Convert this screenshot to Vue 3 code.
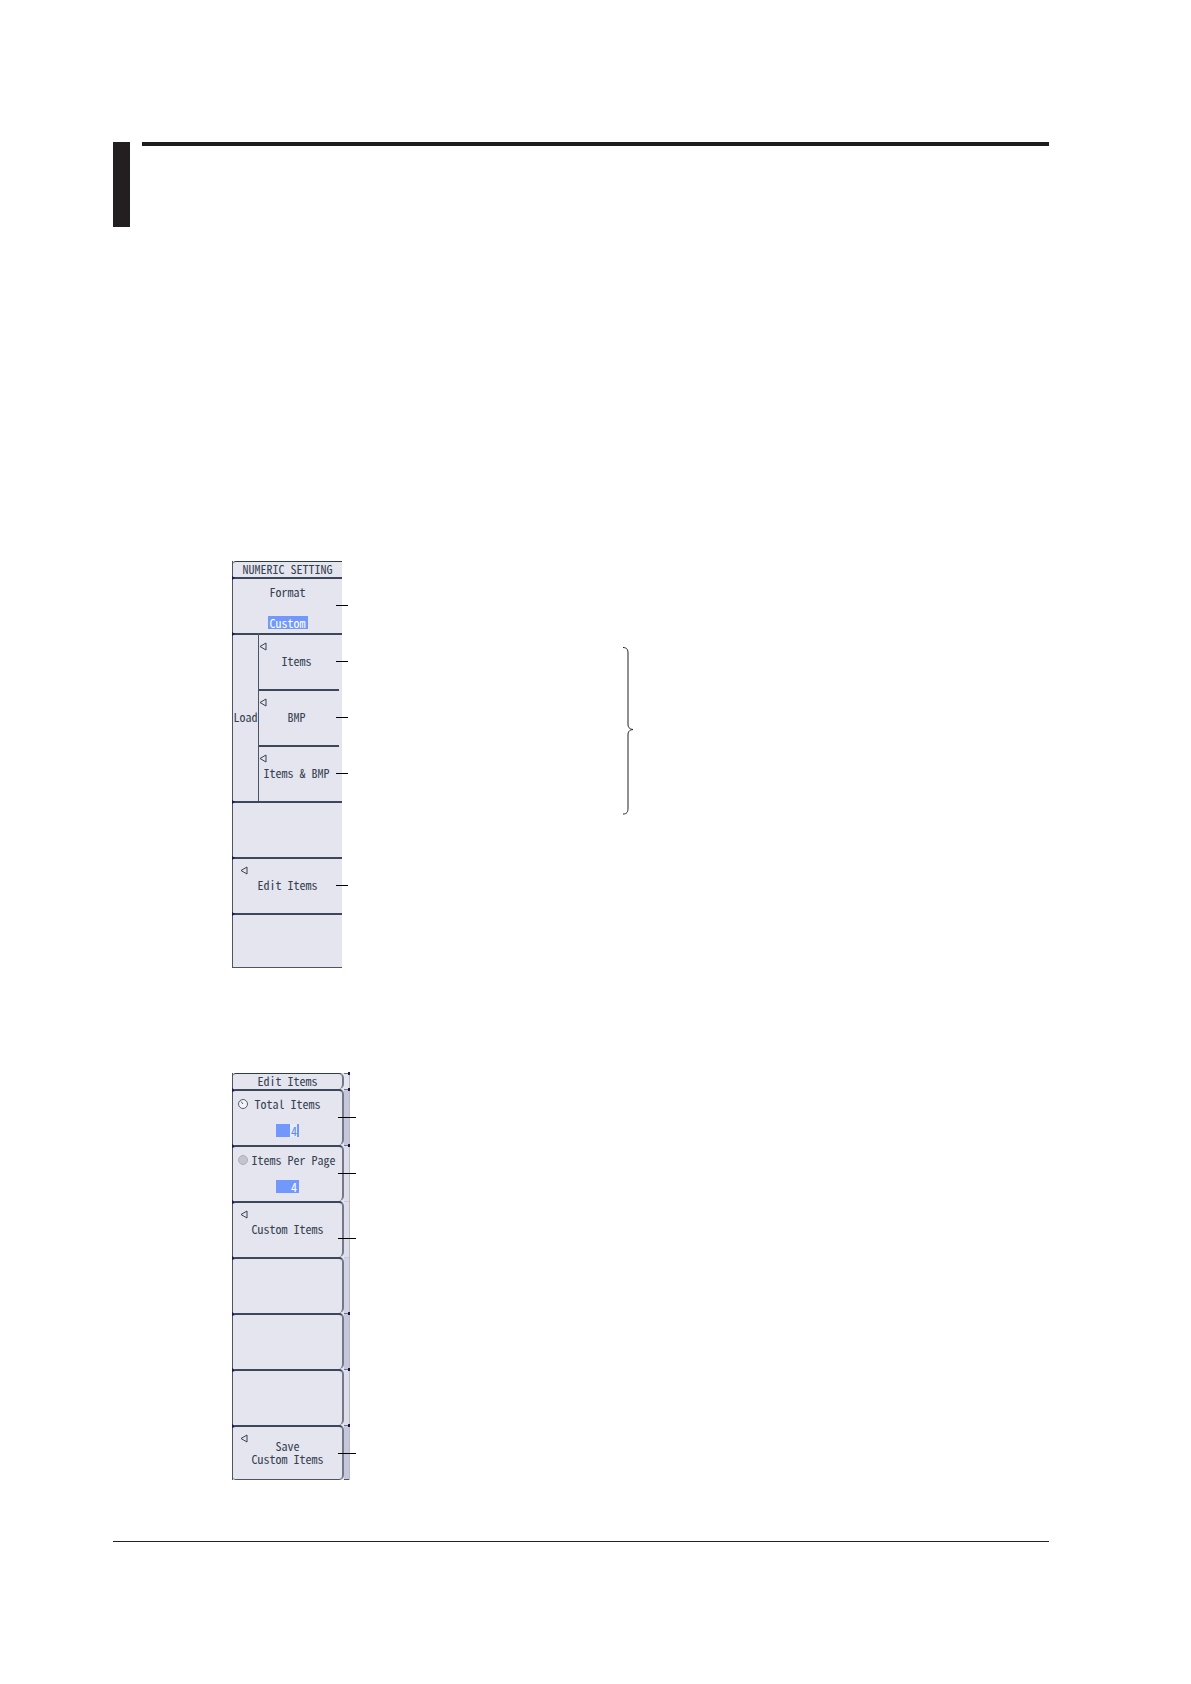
<script setup>
import { ref } from 'vue'

const format = ref('Custom')
const totalItems = ref('4')
const itemsPerPage = ref('4')

const loadItems = ['Items', 'BMP', 'Items & BMP']

// the strip on the right shows the edge of the parent menu
const strip = ['head', 'dark', 'light', 'light joined', 'mid joined', 'dark', 'light', 'dark']
</script>

<template>
  <main class="page">
    <header class="heading">
      <div class="tab"></div>
      <div class="rule"></div>
    </header>

    <section class="figure first">
      <div class="menu">
        <div class="title">NUMERIC SETTING</div>
        <div class="cell stacked spread">
          <label for="format">Format</label>
          <select id="format" v-model="format" class="value wide">
            <option>Custom</option>
          </select>
          <span class="leader"></span>
        </div>
        <div class="group">
          <div class="group-name">Load</div>
          <div class="group-cells">
            <button v-for="item in loadItems" :key="item" type="button" class="cell sub">
              <svg class="arrow" viewBox="0 0 8 9"><path d="M7 1v7L1 4.5z" /></svg>
              <span>{{ item }}</span>
              <span class="leader"></span>
            </button>
          </div>
        </div>
        <button type="button" class="cell" aria-label="Empty"></button>
        <button type="button" class="cell">
          <svg class="arrow" viewBox="0 0 8 9"><path d="M7 1v7L1 4.5z" /></svg>
          <span>Edit Items</span>
          <span class="leader"></span>
        </button>
        <button type="button" class="cell last" aria-label="Empty"></button>
      </div>

      <svg class="brace" viewBox="0 0 10 168">
        <path d="M0 .5C4 .5 5 3 5 6V77C5 80 6 82 10 82.500C6 83 5 85 5 88V161C5 165 4 167 0 167" />
      </svg>
    </section>

    <section class="figure second">
      <div class="menu rounded">
        <div class="title">Edit Items</div>
        <div class="cell stacked">
          <svg class="knob" viewBox="0 0 12 12">
            <circle cx="6" cy="6" r="4.500" />
            <path d="M4 3.500l2 2.500" />
          </svg>
          <label for="total">Total Items</label>
          <input id="total" v-model="totalItems" class="value active" type="text" />
          <span class="leader"></span>
        </div>
        <div class="cell stacked">
          <svg class="knob off" viewBox="0 0 12 12"><circle cx="6" cy="6" r="4.500" /></svg>
          <label for="per-page" class="shifted">Items Per Page</label>
          <input id="per-page" v-model="itemsPerPage" class="value" type="text" />
          <span class="leader"></span>
        </div>
        <button type="button" class="cell">
          <svg class="arrow" viewBox="0 0 8 9"><path d="M7 1v7L1 4.5z" /></svg>
          <span>Custom Items</span>
          <span class="leader low"></span>
        </button>
        <button v-for="n in 3" :key="n" type="button" class="cell" aria-label="Empty"></button>
        <button type="button" class="cell last">
          <svg class="arrow" viewBox="0 0 8 9"><path d="M7 1v7L1 4.5z" /></svg>
          <span>Save<br />Custom Items</span>
          <span class="leader"></span>
        </button>
      </div>
      <div class="strip">
        <div v-for="(tone, i) in strip" :key="i" :class="tone"></div>
      </div>
    </section>

    <footer class="bottom-rule"></footer>
  </main>
</template>

<style>
body {
  margin: 0;
  background: #fff;
}
</style>

<style scoped>
.page {
  padding: 142px 142px 142px 113px;
  font-family: 'Noto Sans Mono CJK JP', 'Liberation Mono', monospace;
  font-size: 12px;
  line-height: 13px;
  color: #35414f;
}

.heading {
  display: flex;
  gap: 12px;
  height: 85px;
}

.tab {
  width: 17px;
  background: #231f20;
}

.rule {
  flex: 1;
  height: 4px;
  background: #1e1c1d;
}

.figure {
  display: flex;
  align-items: flex-start;
  padding-left: 119px;
}

.first {
  margin-top: 334px;
}

.second {
  margin-top: 105px;
}

.menu {
  width: 110px;
  box-sizing: border-box;
  border-left: 1px solid #4d5562;
  background: #e4e5ef;
}

.title {
  height: 16px;
  box-sizing: border-box;
  border-top: 1px solid #2c3f45;
  border-radius: 3px 0 0 0;
  line-height: 14px;
  text-align: center;
  white-space: nowrap;
}

.cell {
  position: relative;
  display: flex;
  align-items: center;
  justify-content: center;
  width: 100%;
  height: 56px;
  box-sizing: border-box;
  margin: 0;
  padding: 0 0 4px;
  border: 0;
  border-top: 2px solid #3c4759;
  background: transparent;
  font: inherit;
  color: inherit;
  text-align: center;
  white-space: nowrap;
}

.cell.last {
  height: 55px;
  padding-bottom: 2px;
  border-bottom: 1px solid #4d5562;
}

/* dark joints where the cells meet the frame */
.menu > .cell::before,
.group::before {
  content: '';
  position: absolute;
  left: -1px;
  top: -3px;
  border: 2px solid transparent;
  border-left: 3px solid #1b1650;
}

.group::before {
  top: -1px;
}

.stacked {
  flex-direction: column;
  justify-content: flex-start;
  gap: 14px;
  padding: 6px 0 0;
}

.spread {
  gap: 18px;
}

.value {
  display: block;
  width: 23px;
  height: 13px;
  box-sizing: border-box;
  margin: 0;
  padding: 0 2px;
  border: 0;
  border-radius: 0;
  outline: 0;
  appearance: none;
  background: #7298fb;
  font: inherit;
  color: #fff;
  text-align: right;
}

.value.wide {
  width: 40px;
  padding: 0;
  text-align: center;
}

.value.active {
  color: #5f86ee;
  background: linear-gradient(#e6ecff, #e6ecff) 14px 0 / 7px 13px no-repeat #7298fb;
}

.shifted {
  padding-left: 12px;
}

.group {
  position: relative;
  display: flex;
}

.group-name {
  display: flex;
  align-items: center;
  justify-content: center;
  width: 25px;
  box-sizing: border-box;
  padding-bottom: 4px;
  border-top: 2px solid #3c4759;
}

.group-cells {
  flex: 1;
  border-left: 1px solid #4d5562;
}

.cell.sub {
  padding-right: 8px;
}

.cell.sub + .sub {
  border-top-color: transparent;
  background: linear-gradient(#3c4759, #3c4759) 0 0 / calc(100% - 3px) 2px no-repeat border-box;
}

.arrow {
  position: absolute;
  left: 7px;
  top: 7px;
  width: 8px;
  height: 9px;
  fill: none;
  stroke: #35414f;
}

.sub .arrow {
  left: 0;
}

.knob {
  position: absolute;
  left: 4px;
  top: 7px;
  width: 12px;
  height: 12px;
  fill: #f3f4f9;
  stroke: #555d69;
}

.knob.off {
  fill: #c3c4cd;
  stroke: #adafb9;
}

.leader {
  position: absolute;
  right: -6px;
  top: 26px;
  width: 12px;
  height: 1px;
  background: #000;
}

.rounded .leader {
  right: -14px;
  width: 18px;
  z-index: 1;
}

.rounded .leader.low {
  top: 35px;
}

.brace {
  width: 10px;
  height: 168px;
  margin: 86px 0 0 281px;
  fill: none;
  stroke: #231f20;
}

.rounded {
  width: 112px;
}

.rounded .title,
.rounded .cell {
  border-right: 2px solid #747989;
  border-radius: 3px 5px 5px 3px;
}

.strip {
  width: 6px;
  box-sizing: border-box;
  border-right: 1px solid #b9bac8;
}

.strip div {
  position: relative;
  height: 56px;
  box-sizing: border-box;
  border-top: 1px solid #6d7286;
}

.strip div:not(.joined)::after {
  content: '';
  position: absolute;
  right: -1px;
  top: -2px;
  width: 2px;
  height: 3px;
  background: #1b1650;
}

.strip .head {
  height: 16px;
  background: #e4e5ef;
}

.strip .dark {
  background: #c6c7dc;
}

.strip .mid {
  background: #d2d3e4;
}

.strip .light {
  background: #dddeea;
}

.strip .joined {
  border-top-color: #c6c7dc;
}

.strip div:last-child {
  height: 55px;
  border-bottom: 1px solid #4d5562;
}

.bottom-rule {
  height: 1px;
  margin-top: 61px;
  background: #231f20;
}
</style>
